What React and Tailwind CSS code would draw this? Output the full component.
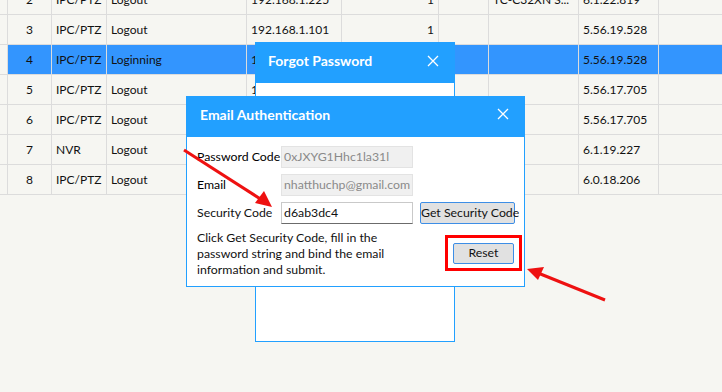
import React from 'react';

// device list rows (row 2 is cut off at the top of the screenshot)
const rows = [
  { no: 2, type: 'IPC/PTZ', status: 'Logout', ip: '192.168.1.225', ch: '1', model: 'TC-C32XN S...', ver: '6.1.22.819' },
  { no: 3, type: 'IPC/PTZ', status: 'Logout', ip: '192.168.1.101', ch: '1', model: '', ver: '5.56.19.528' },
  { no: 4, type: 'IPC/PTZ', status: 'Loginning', ip: '192.168.1.102', ch: '1', model: '', ver: '5.56.19.528', active: true },
  { no: 5, type: 'IPC/PTZ', status: 'Logout', ip: '192.168.1.103', ch: '1', model: '', ver: '5.56.17.705' },
  { no: 6, type: 'IPC/PTZ', status: 'Logout', ip: '192.168.1.104', ch: '1', model: '', ver: '5.56.17.705' },
  { no: 7, type: 'NVR', status: 'Logout', ip: '192.168.1.105', ch: '1', model: '', ver: '6.1.19.227' },
  { no: 8, type: 'IPC/PTZ', status: 'Logout', ip: '192.168.1.106', ch: '1', model: '', ver: '6.0.18.206' },
];

const cols = 'grid-cols-[8px_44px_55px_140px_95px_97px_50px_90px_80px_1fr]';

const CloseIcon = () => (
  <svg width="12" height="12" viewBox="0 0 12 12" stroke="white" strokeWidth="1.3" fill="none">
    <path d="M1 1L11 11M11 1L1 11" />
  </svg>
);

const DeviceRow = ({ r }) => {
  const cell = `h-[30px] flex items-center border-r border-b border-[#dcdcdc] ${r.active ? 'bg-[#3395fe]' : ''}`;
  return (
    <div className={`grid ${cols}`}>
      <div className="h-[30px] border-r border-b border-[#dcdcdc]" />
      <div className={`${cell} justify-center`}>{r.no}</div>
      <div className={`${cell} pl-[4px]`}>{r.type}</div>
      <div className={`${cell} pl-[4px]`}>{r.status}</div>
      <div className={`${cell} pl-[4px]`}>{r.ip}</div>
      <div className={`${cell} justify-end pr-[4px]`}>{r.ch}</div>
      <div className={cell} />
      <div className={`${cell} pl-[4px] whitespace-nowrap overflow-hidden`}>{r.model}</div>
      <div className={`${cell} pl-[4px]`}>{r.ver}</div>
      <div className={`h-[30px] border-b border-[#dcdcdc] ${r.active ? 'bg-[#3395fe]' : ''}`} />
    </div>
  );
};

const Field = ({ label, value, disabled }) => (
  <div className="flex items-center h-[22px] mb-[6px]">
    <div className="w-[94px] pl-[10px] text-black whitespace-nowrap">{label}</div>
    <div
      className={`w-[132px] h-[22px] flex items-center px-[2px] whitespace-nowrap overflow-hidden ${
        disabled
          ? 'bg-[#f0f0f0] border border-[#e3e3e3] text-[#8a8a8a]'
          : 'bg-white border border-[#c9c9c9] border-b-[#6b6b6b] text-black'
      }`}
    >
      {value}
    </div>
  </div>
);

export default function App() {
  return (
    <div
      className="relative w-[722px] h-[392px] overflow-hidden bg-[#f6f6f2] text-[12px] text-[#111]"
      style={{ fontFamily: 'Lato, "Liberation Sans", sans-serif' }}
    >
      {/* device table */}
      <div className="-mt-[15px]">
        {rows.map((r) => (
          <DeviceRow key={r.no} r={r} />
        ))}
      </div>

      {/* Forgot Password dialog */}
      <div className="absolute left-[255px] top-[42px] w-[200px] h-[300px] bg-white border border-[#22a0ff] flex flex-col">
        <div className="h-[41px] -mx-px -mt-px bg-[#22a0ff] flex items-center justify-between pl-[13px] pr-[16px] pb-[4px]">
          <span className="text-white font-bold text-[14px]">Forgot Password</span>
          <CloseIcon />
        </div>
      </div>

      {/* Email Authentication dialog */}
      <div className="absolute left-[186px] top-[96px] w-[339px] h-[191px] bg-white border border-[#22a0ff] flex flex-col text-[12.3px]">
        <div className="h-[41px] -mx-px -mt-px bg-[#22a0ff] flex items-center justify-between pl-[14px] pr-[16px] pb-[5px] shrink-0">
          <span className="text-white font-bold text-[14px]">Email Authentication</span>
          <CloseIcon />
        </div>
        <div className="pt-[9px]">
          <Field label="Password Code" value="0xJXYG1Hhc1la31l" disabled />
          <Field label="Email" value="nhatthuchp@gmail.com" disabled />
          <div className="flex items-center h-[22px]">
            <div className="w-[94px] pl-[10px] whitespace-nowrap">Security Code</div>
            <div className="w-[132px] h-[22px] flex items-center px-[2px] bg-white border border-[#c9c9c9] border-b-[#6b6b6b]">
              d6ab3dc4
            </div>
            <button className="ml-[7px] w-[95px] h-[22px] bg-[#e1e1e1] border border-[#3d8ee6] rounded-[2px] whitespace-nowrap leading-none">
              Get Security Code
            </button>
          </div>
          <div className="flex items-start mt-[6px]">
            <p className="w-[200px] pl-[10px] leading-[16px]">
              Click Get Security Code, fill in the password string and bind the email information and submit.
            </p>
            <div className="ml-[58px] mt-[5px] w-[77px] h-[36px] border-[3px] border-[#ff0000] flex items-center justify-center">
              <button className="w-[61px] h-[21px] bg-[#e1e1e1] border border-[#3d8ee6] rounded-[2px] leading-none">
                Reset
              </button>
            </div>
          </div>
        </div>
      </div>

      {/* annotation arrows */}
      <svg className="absolute inset-0 pointer-events-none" width="722" height="392">
        <line x1="184" y1="150" x2="262" y2="200" stroke="#ee1111" strokeWidth="3" />
        <polygon points="272,207 255,203 264,191" fill="#ee1111" />
        <line x1="605" y1="300" x2="538" y2="273" stroke="#ee1111" strokeWidth="3" />
        <polygon points="527,269 544,267 538,280" fill="#ee1111" />
      </svg>
    </div>
  );
}
